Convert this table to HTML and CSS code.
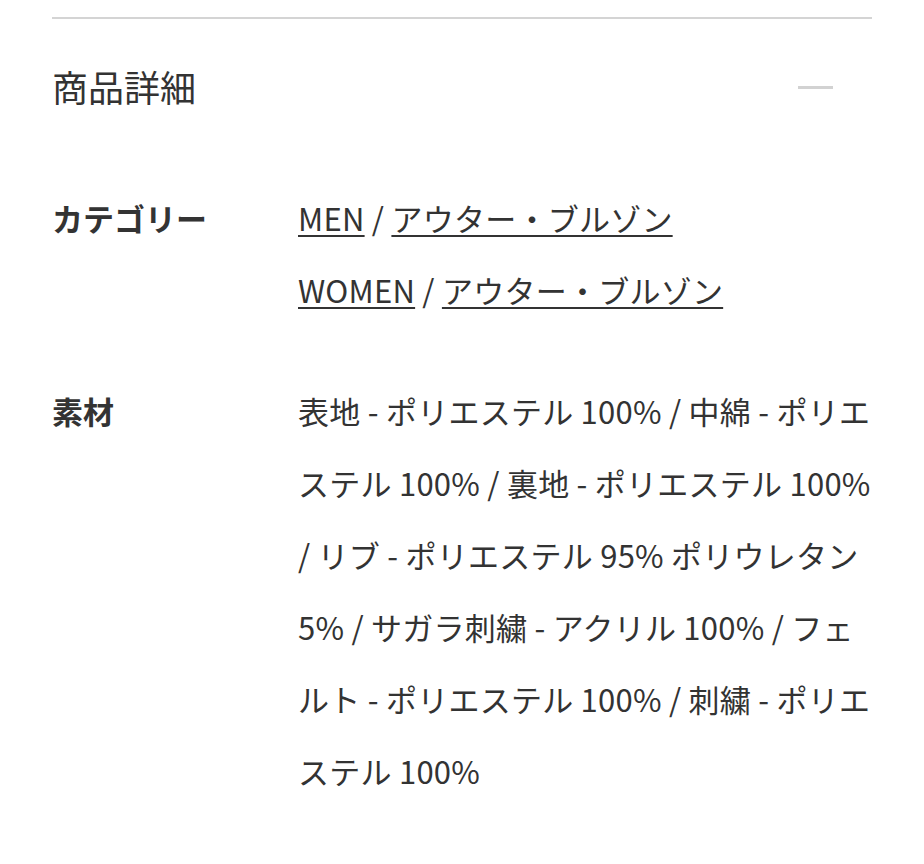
FILE: index.html
```html
<!DOCTYPE html>
<html lang="ja">
<head>
<meta charset="utf-8">
<link rel="stylesheet" href="styles.css">
</head>
<body>
<section class="details">
  <div class="details-head">
    <h2 class="details-title">商品詳細</h2>
    <span class="toggle" aria-hidden="true"></span>
  </div>
  <dl class="spec">
    <div class="spec-row spec-row--cat">
      <dt class="spec-label">カテゴリー</dt>
      <dd class="spec-value">
        <div><a href="#">MEN</a> / <a href="#">アウター・ブルゾン</a></div>
        <div><a href="#">WOMEN</a> / <a href="#">アウター・ブルゾン</a></div>
      </dd>
    </div>
    <div class="spec-row">
      <dt class="spec-label">素材</dt>
      <dd class="spec-value">表地 - ポリエステル 100% / 中綿 - ポリエステル 100% / 裏地 - ポリエステル 100% / リブ - ポリエステル 95% ポリウレタン 5% / サガラ刺繍 - アクリル 100% / フェルト - ポリエステル 100% / 刺繍 - ポリエステル 100%</dd>
    </div>
  </dl>
</section>
</body>
</html>
```
FILE: styles.css
```css
html, body {
  margin: 0;
  padding: 0;
  background: #fff;
}
body {
  font-family: "Noto Sans CJK JP", "Noto Sans", sans-serif;
  color: #333;
}
.details {
  margin: 17px 52px 0;
  border-top: 2px solid #d4d4d4;
}
.details-head {
  display: flex;
  align-items: center;
  justify-content: space-between;
  padding-top: 40px;
}
.details-title {
  margin: 0;
  font-size: 36px;
  font-weight: 400;
  line-height: 54px;
  color: #333;
}
.toggle {
  width: 35px;
  height: 3px;
  background: #d2d2d2;
  margin-right: 39px;
  margin-top: 2px;
}
.spec {
  margin: 81px 0 0;
}
.spec-row {
  display: flex;
  margin-bottom: 61px;
}
.spec-label {
  flex: 0 0 246px;
  font-size: 31px;
  font-weight: 700;
  line-height: 72px;
  margin-top: -12px;
}
.spec-value {
  margin: 0;
  flex: 1;
  font-size: 31px;
  line-height: 72px;
  margin-top: -12px;
  letter-spacing: 0.25px;
}
.spec-value a {
  color: #333;
  text-decoration: underline;
  text-underline-offset: 4px;
  text-decoration-thickness: 2px;
}
```
